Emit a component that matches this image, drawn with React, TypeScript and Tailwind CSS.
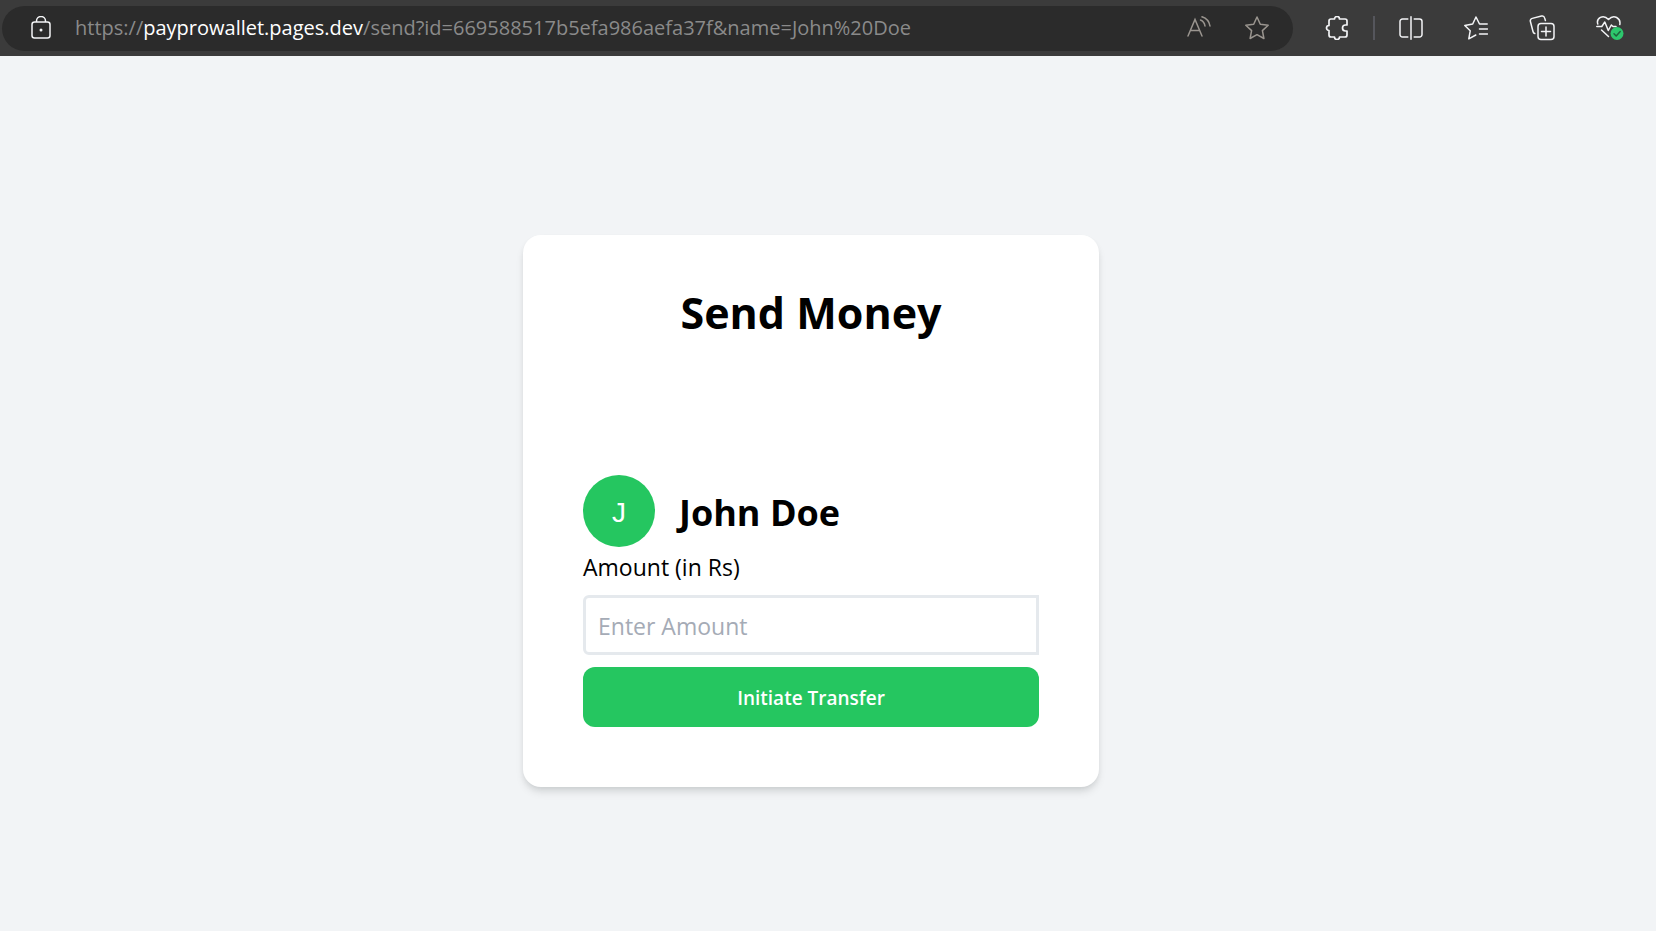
import { useState } from 'react';

const LockIcon = () => (
  <svg className="h-6 w-5" viewBox="0 0 20 24" fill="none" stroke="currentColor" strokeWidth="1.5">
    <rect x="1" y="6" width="18" height="16" rx="2.5" />
    <path d="M5.500 6V5a4.500 4.500 0 0 1 9 0v1" />
    <circle cx="10" cy="14" r="1.5" fill="currentColor" stroke="none" />
  </svg>
);

const ReadAloudIcon = () => (
  <svg
    className="h-6 w-6"
    viewBox="0 0 24 24"
    fill="none"
    stroke="currentColor"
    strokeWidth="1.5"
    strokeLinecap="round"
  >
    <path d="M1 20 8 3.500 15 20M3.300 14.500h9.400" />
    <path d="M13.500 4c2.500 1 4 3 4.500 6M15 .8c4.500 1.500 7.300 4.700 8 9.200" />
  </svg>
);

const StarIcon = () => (
  <svg
    className="h-6 w-6"
    viewBox="0 0 24 24"
    fill="none"
    stroke="currentColor"
    strokeWidth="1.5"
    strokeLinejoin="round"
  >
    <path d="m12 1 3.300 7.200 7.900 1-5.800 5.400 1.500 7.900L12 18.700l-6.900 3.800 1.500-7.900L.8 9.200l7.900-1z" />
  </svg>
);

const ExtensionsIcon = () => (
  <svg
    className="h-6 w-6"
    viewBox="0 0 24 24"
    fill="none"
    stroke="currentColor"
    strokeWidth="1.7"
    strokeLinejoin="round"
  >
    <path d="M6 3h3.500a2.500 2.500 0 0 1 5 0H20a2 2 0 0 1 2 2v4h-1.500a3 3 0 0 0 0 6H22v4a2 2 0 0 1-2 2h-5.500a2.500 2.500 0 0 1-5 0H6a2 2 0 0 1-2-2v-4.500a2.500 2.500 0 0 1 0-5V5a2 2 0 0 1 2-2z" />
  </svg>
);

const SplitScreenIcon = () => (
  <svg
    className="h-6 w-6"
    viewBox="0 0 24 24"
    fill="none"
    stroke="currentColor"
    strokeWidth="1.500"
    strokeLinecap="round"
  >
    <path d="M12 .8v22.400M8.800 3H3.500a2.500 2.500 0 0 0-2.500 2.500v13A2.500 2.500 0 0 0 3.500 21h5.300M15.200 3h5.300A2.500 2.500 0 0 1 23 5.500v13a2.500 2.500 0 0 1-2.500 2.500h-5.300" />
  </svg>
);

const FavoritesIcon = () => (
  <svg
    className="h-6 w-6"
    viewBox="0 0 24 24"
    fill="none"
    stroke="currentColor"
    strokeWidth="1.500"
    strokeLinecap="round"
    strokeLinejoin="round"
  >
    <path d="M23.200 8h-7.700L12 1 8.700 8 .8 9.500l5.400 5.300-1.400 8 7-3.800M15.500 13h8M15.500 18h8" />
  </svg>
);

const CollectionsIcon = () => (
  <svg
    className="h-[26px] w-[26px]"
    viewBox="0 0 26 26"
    fill="none"
    stroke="currentColor"
    strokeWidth="1.500"
    strokeLinecap="round"
  >
    <rect x="9" y="8.500" width="16" height="16" rx="3" />
    <path d="M17 12v9M12.500 16.500h9M5.800 18.500c-1-.3-1.600-1-1.800-2L1.400 6.500C1 5 1.800 3.800 3.300 3.400l9.200-2.300c1.500-.4 2.700.3 3.100 1.800l.8 2.600" />
  </svg>
);

const EssentialsIcon = () => (
  <svg className="h-[26px] w-[28px]" viewBox="0 0 28 26" fill="none" strokeLinecap="round" strokeLinejoin="round">
    <g stroke="currentColor" strokeWidth="1.500">
      <path d="M1.800 9C0 3.500 7-1.500 12.500 4.500 18-1.500 25 3.500 23.800 9.500" />
      <path d="M.8 11.500h5l3-4.500 3.500 8.500 3-5.500 1.700 1.500h3M5.500 15l7 6.500" />
    </g>
    <circle cx="21" cy="18.500" r="6.500" fill="#2dc76d" />
    <path d="m18 18.800 2.200 2.200 4-4.500" stroke="#20633d" strokeWidth="1.500" />
  </svg>
);

const toolbarButtons = [
  { label: 'Split screen', icon: <SplitScreenIcon /> },
  { label: 'Favorites', icon: <FavoritesIcon /> },
  { label: 'Collections', icon: <CollectionsIcon /> },
  { label: 'Browser essentials', icon: <EssentialsIcon /> },
];

const BrowserBar = () => (
  <header className="flex h-14 shrink-0 items-center bg-[#3b3b3b] pr-8 text-gray-100">
    <div className="ml-0.5 mr-8 flex h-[45px] flex-1 items-center rounded-full bg-[#2b2b2b] pl-[29px] pr-6">
      <button aria-label="Site information" className="mr-6">
        <LockIcon />
      </button>
      <p className="flex-1 truncate text-[20px] leading-7 text-[#8a8a8a]">
        https://<span className="text-white">payprowallet.pages.dev</span>
        /send?id=669588517b5efa986aefa37f&amp;name=John%20Doe
      </p>
      <div className="flex items-center gap-[34px] text-[#9a958f]">
        <button aria-label="Read aloud">
          <ReadAloudIcon />
        </button>
        <button aria-label="Add to favorites">
          <StarIcon />
        </button>
      </div>
    </div>
    <button aria-label="Extensions">
      <ExtensionsIcon />
    </button>
    <span className="mx-6 h-6 w-0.5 bg-[#55565c]" />
    <div className="flex items-center gap-[41px]">
      {toolbarButtons.map(({ label, icon }) => (
        <button key={label} aria-label={label}>
          {icon}
        </button>
      ))}
    </div>
  </header>
);

const SendMoneyCard = ({ name }: { name: string }) => {
  const [amount, setAmount] = useState('');

  return (
    <div className="w-full max-w-[576px] rounded-[18px] bg-white px-[60px] pb-[60px] pt-12 shadow-[0_6px_9px_-1px_rgba(0,20,20,0.1),0_3px_6px_-2px_rgba(0,20,20,0.1)]">
      <h2 className="text-center text-[43px] font-bold leading-[60px]">Send Money</h2>
      <div className="mt-[132px] flex items-center gap-6">
        <div className="flex h-[72px] w-[72px] items-center justify-center rounded-full bg-[#25c660]">
          <span className="pt-1 font-['Liberation_Sans',sans-serif] text-[28px] text-white">
            {name[0].toUpperCase()}
          </span>
        </div>
        <h3 className="pt-1 text-[36px] font-bold leading-[48px]">{name}</h3>
      </div>
      <form onSubmit={(e) => e.preventDefault()}>
        <label htmlFor="amount" className="block pb-2.5 pt-0.5 text-[23px] leading-9">
          Amount (in Rs)
        </label>
        <input
          id="amount"
          type="text"
          value={amount}
          onChange={(e) => setAmount(e.target.value)}
          placeholder="Enter Amount"
          className="block h-[60px] w-full rounded-l-md border-[3px] border-[#e5e9ed] px-3 pt-0.5 text-[23px] placeholder:text-[#a5abb6]"
        />
        <button
          type="submit"
          className="mt-3 h-[60px] w-full rounded-xl bg-[#25c660] pt-0.5 text-[19px] font-semibold text-white"
        >
          Initiate Transfer
        </button>
      </form>
    </div>
  );
};

const App = () => (
  <div className="flex min-h-screen flex-col bg-[#f2f4f6] font-['Open_Sans','Noto_Sans',sans-serif] text-black">
    <BrowserBar />
    <main className="flex flex-1 items-center justify-center pr-[34px] pt-[35px]">
      <SendMoneyCard name="John Doe" />
    </main>
  </div>
);

export default App;
